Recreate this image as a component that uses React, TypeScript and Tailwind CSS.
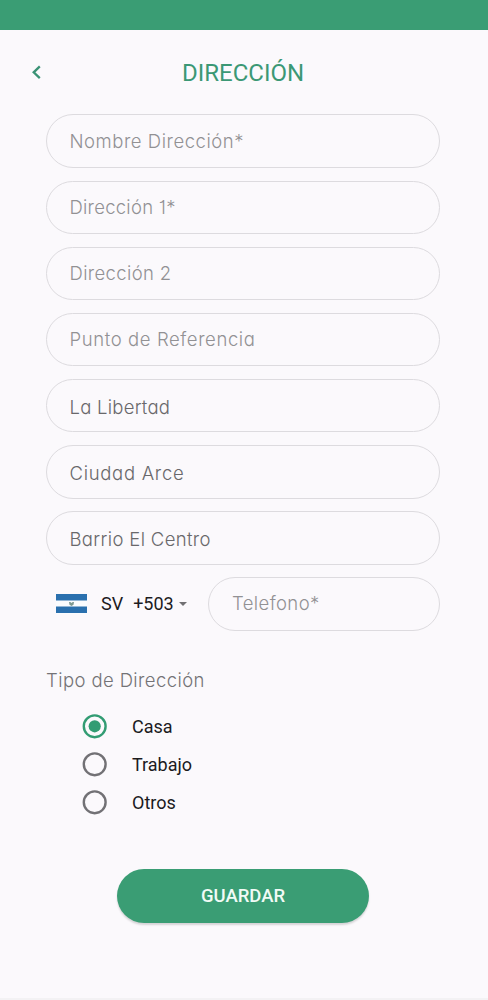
import { useState } from "react";
import { clsx } from "clsx";

const geometric = "font-['Inter',sans-serif] [font-feature-settings:'cv11','cv01'] font-[350]";

const fields = [
  { label: "Nombre Dirección*", filled: false, tracking: "tracking-[0.54px]" },
  { label: "Dirección 1*", filled: false, tracking: "tracking-[0.25px]" },
  { label: "Dirección 2", filled: false, tracking: "tracking-[0.35px]" },
  { label: "Punto de Referencia", filled: false, tracking: "tracking-[0.6px]" },
  { label: "La Libertad", filled: true, tracking: "tracking-[0.25px]" },
  { label: "Ciudad Arce", filled: true, tracking: "tracking-[0.7px]" },
  { label: "Barrio El Centro", filled: true, tracking: "tracking-[0.35px]" },
];

const addressTypes = ["Casa", "Trabajo", "Otros"];

function FlagSV() {
  return (
    <svg width="31" height="20" viewBox="0 0 31 20">
      <rect width="31" height="20" fill="#fafcfe" />
      <rect width="31" height="6.5" fill="#2a70ae" />
      <rect y="12.5" width="31" height="6.5" fill="#2a70ae" />
      <path d="M13 8h1.3l1.2 1 1.2-1H18l-.5 2.8-2 1.3-2-1.3z" fill="#7d9992" />
    </svg>
  );
}

function Radio({ checked }: { checked: boolean }) {
  const color = checked ? "#329c73" : "#727175";
  return (
    <svg width="25" height="25" viewBox="0 0 25 25" fill="none">
      <circle cx="12.7" cy="12.3" r="10.9" stroke={color} strokeWidth="2.4" />
      {checked && <circle cx="12.7" cy="12.3" r="6.1" fill={color} />}
    </svg>
  );
}

export default function App() {
  const [selected, setSelected] = useState("Casa");

  return (
    <div className="flex h-[1000px] w-[488px] flex-col border-b-2 border-[#f3f2f4] bg-[#fbf9fc] font-['Roboto',sans-serif]">
      <div className="h-[30px] shrink-0 bg-[#3a9d74]" />

      {/* Header */}
      <header className="grid h-[84.45px] shrink-0 grid-cols-[46px_1fr_48px] items-center">
        <button aria-label="Atrás" className="flex justify-end pr-[3px]">
          <svg width="13" height="18" viewBox="0 0 13 18" fill="none">
            <path d="M9.8 3.4 3.7 9.3l6.1 5.9" stroke="#3a9275" strokeWidth="2.3" />
          </svg>
        </button>
        <h1 className="pt-px text-center text-[24px] leading-7 text-[#3b9875]">DIRECCIÓN</h1>
      </header>

      <main className="flex flex-col pr-12 pl-[46px]">
        <div className="flex flex-col gap-[12.5px]">
          {fields.map((field) => (
            <div
              key={field.label}
              className={clsx(
                "flex h-[53.6px] items-center rounded-full border border-[#dddbdf] pl-[22.5px] text-[18.5px] leading-6 whitespace-nowrap",
                geometric,
                field.tracking,
                field.filled ? "pt-[2px] text-[#69686b]" : "pb-px text-[#929194]"
              )}
            >
              {field.label}
            </div>
          ))}

          {/* Phone */}
          <div className="flex">
            <button className="flex w-[162px] items-center pl-[10px] text-[18px] text-[#1c1b1e]">
              <FlagSV />
              <span className="ml-[14px]">SV</span>
              <span className="ml-[10px]">+503</span>
              <svg className="ml-[5px]" width="8" height="4" viewBox="0 0 8 4">
                <path d="M0 0h8L4 4z" fill="#717073" />
              </svg>
            </button>
            <div
              className={clsx(
                "flex h-[53.6px] flex-1 items-center rounded-full border border-[#dddbdf] pb-[2px] pl-[23px] text-[18.5px] leading-6 tracking-[0.4px] text-[#929194]",
                geometric
              )}
            >
              Telefono*
            </div>
          </div>
        </div>

        {/* Address type */}
        <h2 className={clsx("mt-[37.4px] text-[18.5px] leading-6 tracking-[0.4px] text-[#747376]", geometric)}>
          Tipo de Dirección
        </h2>
        <div className="mt-[15px] flex flex-col pl-[36px]">
          {addressTypes.map((type) => (
            <button
              key={type}
              onClick={() => setSelected(type)}
              className="flex h-[38px] items-center text-left text-[18px] text-[#1c1b1e]"
            >
              <Radio checked={selected === type} />
              <span className="ml-[25px]">{type}</span>
            </button>
          ))}
        </div>
      </main>

      <button className="mt-[48px] ml-[117px] h-[54px] w-[252px] rounded-full bg-[#3a9d74] pt-px text-[18.5px] font-medium text-[#f1fbf6] shadow-[0_2px_2px_rgba(0,0,0,0.15)]">
        GUARDAR
      </button>
    </div>
  );
}
